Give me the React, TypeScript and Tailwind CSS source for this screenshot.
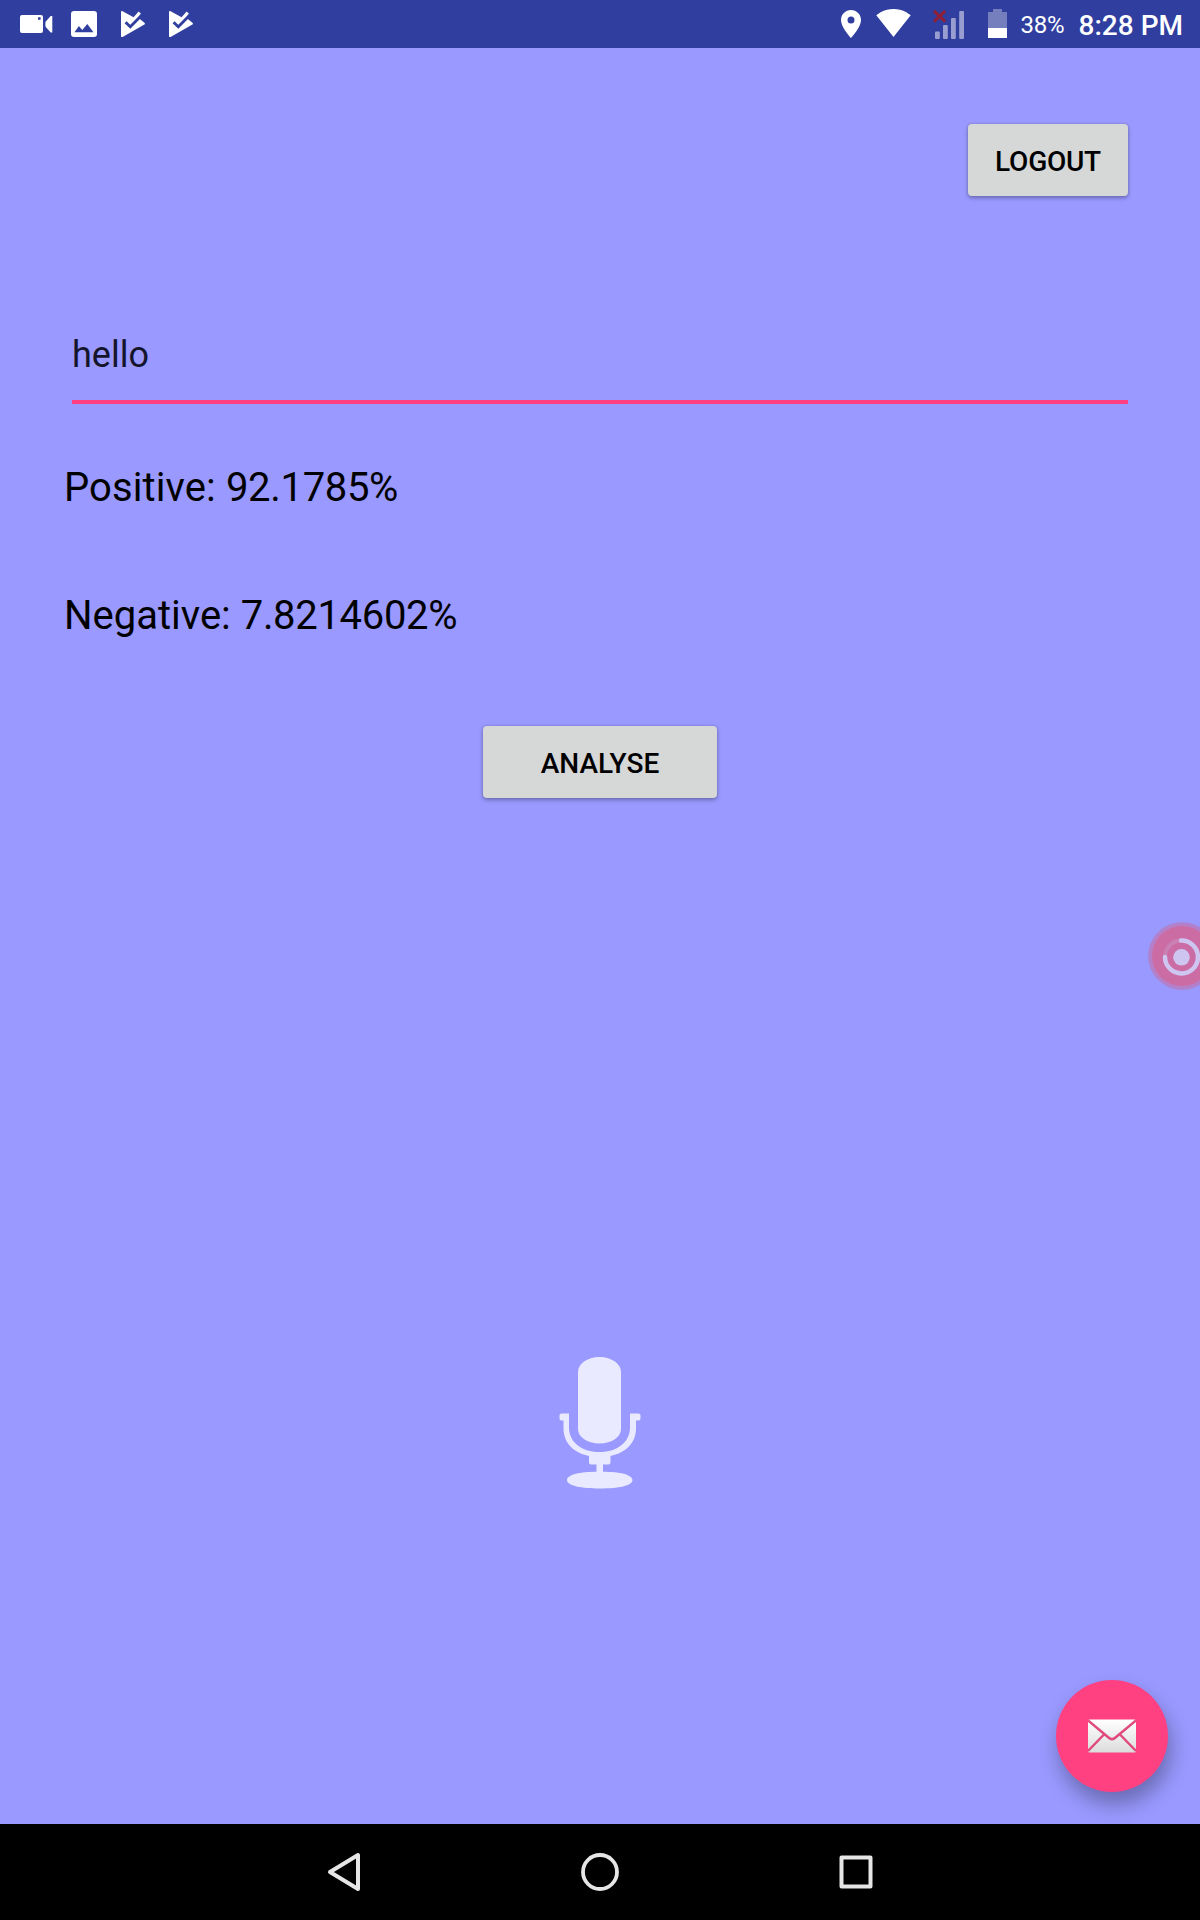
import React from "react";

function VideoIcon() {
  return (
    <svg className="block h-12 w-[33px]" viewBox="20 0 33 48" fill="#fff">
      <path fillRule="evenodd" d="M22 15h19a2 2 0 0 1 2 2v14a2 2 0 0 1-2 2H22a2 2 0 0 1-2-2V17a2 2 0 0 1 2-2zM38 17.3v2.4h2.6v-2.4z" />
      <path d="M52.3 16v16.4h-1.6L46 27.2a2 2 0 0 1-.6-1.5v-3a2 2 0 0 1 .6-1.5L50.7 16z" />
    </svg>
  );
}

function ImageIcon() {
  return (
    <svg className="block h-12 w-[26px]" viewBox="71 0 26 48" fill="#fff">
      <path fillRule="evenodd" d="M74 11h20a3 3 0 0 1 3 3v20a3 3 0 0 1-3 3H74a3 3 0 0 1-3-3V14a3 3 0 0 1 3-3zM74.5 32.3h19L87.3 24l-5 6-3.4-4z" />
    </svg>
  );
}

function PlayCheckIcon() {
  return (
    <svg className="block h-12 w-[26px]" viewBox="120 0 26 48">
      <path fill="#fff" d="M121 12.2c0-.9.8-1.4 1.6-1L133.6 17.2l5-5.6 2.4 2.2-3 3.8 6.4 5.2c.8.5.8 1.4 0 1.8l-21.8 12.3c-.8.4-1.6 0-1.6-.9z" />
      <path fill="none" stroke="#303f9f" strokeWidth="2.8" d="M125.6 22.2l4.7 4.6L142.7 14.3" />
    </svg>
  );
}

function PinIcon() {
  return (
    <svg className="block h-12 w-5" viewBox="841 0 20 48" fill="#fff">
      <path fillRule="evenodd" d="M851 10c-5.5 0-10 4.4-10 9.9 0 7.3 10 18.1 10 18.1s10-10.8 10-18.1C861 14.4 856.5 10 851 10zm0 6.4a3.5 3.5 0 1 1 0 7 3.5 3.5 0 0 1 0-7z" />
    </svg>
  );
}

function WifiIcon() {
  return (
    <svg className="block h-12 w-[35px]" viewBox="876.5 0 35 48" fill="#fff">
      <path d="M894 37l17.2-21.7C909 13.7 903.5 9 894 9s-15 4.7-17.2 6.3z" />
    </svg>
  );
}

function SignalIcon() {
  return (
    <svg className="block h-12 w-8" viewBox="933 0 32 48">
      <g fill="#989fd0">
        <rect x="935" y="31.5" width="4.8" height="7.5" rx="1" />
        <rect x="943" y="25" width="4.8" height="14" rx="1" />
        <rect x="951" y="18" width="4.8" height="21" rx="1" />
        <rect x="959.2" y="11" width="4.8" height="28" rx="1" />
      </g>
      <path d="M934 10.8l11.2 10.8m0-10.8l-11.2 10.8" stroke="#8e1f37" strokeWidth="3" />
    </svg>
  );
}

function BatteryIcon() {
  return (
    <svg className="block h-12 w-[19px]" viewBox="988 0 19 48">
      <path fill="#757fbe" d="M993 9h9v3h5v16h-19V12h5z" />
      <path fill="#fff" d="M988 28h19v10h-19z" />
    </svg>
  );
}

function StatusBar() {
  return (
    <header className="flex h-12 shrink-0 items-center justify-between bg-[#303f9f] pl-5 pr-[17px] text-white">
      <div className="flex items-center">
        <VideoIcon />
        <div className="ml-[18px]"><ImageIcon /></div>
        <div className="ml-[23px]"><PlayCheckIcon /></div>
        <div className="ml-[22px]"><PlayCheckIcon /></div>
      </div>
      <div className="flex items-center">
        <PinIcon />
        <div className="ml-[15px]"><WifiIcon /></div>
        <div className="ml-[22px]"><SignalIcon /></div>
        <div className="ml-[23px]"><BatteryIcon /></div>
        <span className="ml-3.5 w-[58px] pt-0.5 text-2xl leading-8 tracking-[-0.3px]">38%</span>
        <span className="pt-1 text-[28px] font-medium leading-8">8:28 PM</span>
      </div>
    </header>
  );
}

function RaisedButton({ label, className }: { label: string; className: string }) {
  return (
    <button
      className={
        "flex h-[72px] items-center justify-center rounded-[4px] bg-[#d6d7d7] pt-1 text-[28px] font-medium text-black shadow-[0_2px_4px_rgba(0,0,0,0.28),0_0_3px_rgba(0,0,0,0.15)] " +
        className
      }
    >
      {label}
    </button>
  );
}

function Microphone() {
  return (
    <svg className="block h-[136px] w-[84px]" viewBox="558 1355 84 136">
      <g fill="#e9e9ff">
        <path d="M578 1372c0-8 9-15 21.5-15s21.5 7 21.5 15v57c0 8-9 14.5-21.5 14.5s-21.5-6.5-21.5-14.5z" />
        <path d="M561.5 1413.5H569v14c0 14 12 24.5 30.5 24.5s30.5-10.5 30.5-24.5v-14h8.5a2 2 0 0 1 2 2v3a2 2 0 0 1-2 2H636v8c0 15-11 24.5-25.5 27.5v6.5a2 2 0 0 1-2 2H603v7.3c16 0 29.5 2.8 29.5 8.2 0 5.8-14 8.5-32.5 8.5s-33-2.7-33-8.5c0-5.4 13.5-8.2 29.5-8.2v-7.3h-5.5a2 2 0 0 1-2-2V1456c-14.5-3-25.5-12.5-25.5-27.5v-8h-2a2 2 0 0 1-2-2v-3a2 2 0 0 1 2-2z" />
      </g>
    </svg>
  );
}

function RecorderBubble() {
  return (
    <div className="absolute right-0 top-[921px] h-[70px] w-[54px] overflow-hidden">
      <svg className="block h-[70px] w-[54px]" viewBox="1146 921 54 70">
        <circle cx="1182" cy="956" r="34" fill="#ab86d5" />
        <circle cx="1182" cy="956" r="33" fill="#b480c9" />
        <circle cx="1182" cy="956" r="30" fill="#cc6ca4" />
        <circle cx="1181.5" cy="957" r="16.5" fill="none" stroke="#cb80b5" strokeWidth="4" />
        <path d="M1181 940.5a16.5 16.5 0 1 1-16 16.5" fill="none" stroke="#cec5f1" strokeWidth="4.5" strokeLinecap="round" />
        <circle cx="1181.5" cy="957.3" r="8.3" fill="#cec5f1" />
      </svg>
    </div>
  );
}

function MailFab() {
  return (
    <button className="absolute left-[1056px] top-[1680px] flex size-28 items-center justify-center rounded-full bg-[#ff4081] shadow-[3px_12px_20px_rgba(0,0,0,0.3)]">
      <svg className="block h-[34px] w-12" viewBox="0 0 48 34">
        <defs>
          <linearGradient id="paper" x1="0" y1="0" x2="0" y2="1">
            <stop offset="0" stopColor="#fff" />
            <stop offset="1" stopColor="#dcdcdc" />
          </linearGradient>
        </defs>
        <rect y=".5" width="48" height="33" rx="1.5" fill="url(#paper)" />
        <path d="M0 1.5l20.5 17c2.2 2 4.8 2 7 0L48 1.5M0 32l16-16.5M48 32L32 15.5" fill="none" stroke="#df4c7c" strokeWidth="2.5" />
      </svg>
    </button>
  );
}

function NavigationBar() {
  return (
    <nav className="flex h-24 shrink-0 items-center bg-black pl-[327px]">
      <svg className="block h-10 w-[34px]" viewBox="327 1852 34 40">
        <path d="M358 1855v34l-28-17z" fill="none" stroke="#e6e6e6" strokeWidth="4" strokeLinejoin="round" />
      </svg>
      <svg className="ml-[219px] block size-10" viewBox="0 0 40 40">
        <circle cx="20" cy="20" r="17" fill="none" stroke="#e6e6e6" strokeWidth="3.8" />
      </svg>
      <svg className="ml-[218px] block size-9" viewBox="0 0 36 36">
        <rect x="3.5" y="3.5" width="29" height="29" fill="none" stroke="#e6e6e6" strokeWidth="4" strokeLinejoin="round" />
      </svg>
    </nav>
  );
}

export default function App() {
  return (
    <div className="relative flex h-[1920px] w-[1200px] flex-col overflow-hidden bg-[#9999ff] font-['Roboto',sans-serif]">
      <StatusBar />
      <main className="flex flex-1 flex-col px-16">
        <RaisedButton label="LOGOUT" className="mr-2 mt-[76px] w-40 self-end tracking-[-0.25px]" />
        <div className="mx-2 mt-[138px] h-[70px] border-b-4 border-[#ff4081] text-4xl leading-[42px] text-[#14142b]">hello</div>
        <p className="mt-[60px] text-[40px] leading-[48px] text-black">
          <span className="tracking-[0.1px]">Positive: </span>
          <span className="tracking-[-0.32px]">92.1785%</span>
        </p>
        <p className="mt-20 text-[40px] leading-[48px] text-black">
          Negative: <span className="tracking-[-0.32px]">7.8214602%</span>
        </p>
        <RaisedButton label="ANALYSE" className="mt-[86px] w-[234px] self-center" />
        <div className="mt-[557px] self-center">
          <Microphone />
        </div>
      </main>
      <NavigationBar />
      <RecorderBubble />
      <MailFab />
    </div>
  );
}
